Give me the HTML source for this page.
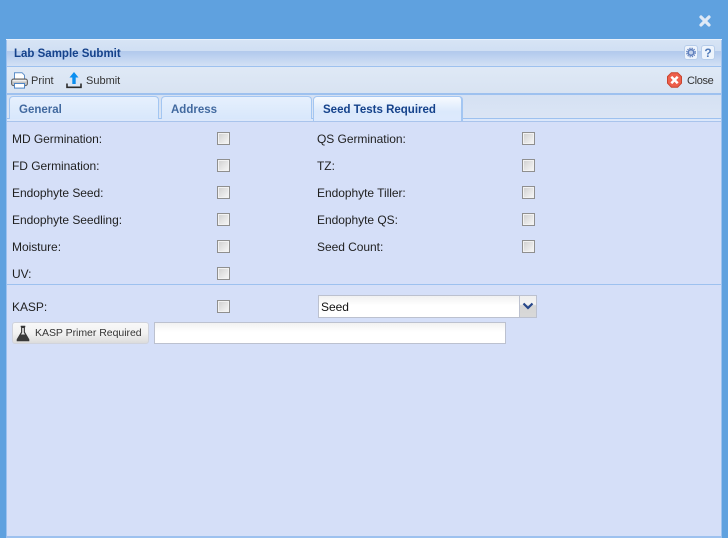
<!DOCTYPE html>
<html>
<head>
<meta charset="utf-8">
<style>
html,body{margin:0;padding:0;width:728px;height:538px;overflow:hidden;background:#5fa1df;font-family:"Liberation Sans",sans-serif;font-size:12px;color:#222}
div,span{position:absolute;box-sizing:border-box}
svg{position:absolute}
.win{left:6px;top:39px;width:716px;height:499px;background:#d5dff8;border-left:1px solid #9cc1ef;border-right:1px solid #9cc1ef}
.abs{white-space:nowrap;line-height:14px}
.lbl{white-space:nowrap;line-height:14px;font-size:12px;color:#1f1f1f;letter-spacing:-.04px}
.tb{white-space:nowrap;line-height:14px;font-size:11px;color:#333}
.cb{width:13px;height:13px;border:1px solid #8f8f8f;background:linear-gradient(135deg,#cfcfcf,#f8f8f8);box-shadow:inset 0 0 0 1px #f2f2f2}
.tab{top:96px;height:23px;border:1px solid #a3c6f2;border-bottom:none;border-radius:4px 4px 0 0;background:linear-gradient(#e6f0fd,#d8e7fc);font-weight:bold;font-size:11.5px;color:#41699f;padding:6px 0 0 9px;line-height:14px;white-space:nowrap}
</style>
</head>
<body>
<svg style="left:698px;top:14px" width="14" height="14" viewBox="0 0 14 14"><path d="M3 3L11 11M11 3L3 11" stroke="#dfe9f6" stroke-width="3.2" stroke-linecap="round"/></svg>

<div class="win"></div>
<div style="left:6px;top:39px;width:716px;height:1px;background:#e8f0fb"></div>
<div style="left:7px;top:40px;width:714px;height:26px;background:linear-gradient(#d7e4f5 0,#d0dff3 11px,#b2c9ec 11px,#b7cdee 14px,#d3e1f5 100%)"></div>
<div class="abs" style="left:14px;top:47px;font-weight:bold;font-size:11.5px;color:#15428b">Lab Sample Submit</div>
<div style="left:684px;top:45px;width:14px;height:15px;background:#eef4fc;border:1px solid #b7cdea;border-radius:3px"></div>
<svg style="left:686px;top:47px" width="10" height="11" viewBox="0 0 10 11"><circle cx="5" cy="5.5" r="2.8" fill="#c3d2ec" stroke="#5f7fbd" stroke-width="1.6"/><circle cx="5" cy="5.5" r="4.3" fill="none" stroke="#5f7fbd" stroke-width="1.2" stroke-dasharray="1.3 1"/></svg>
<div style="left:701px;top:45px;width:14px;height:15px;background:#eef4fc;border:1px solid #b7cdea;border-radius:3px"></div>
<div class="abs" style="left:701px;top:46px;width:14px;text-align:center;font-weight:bold;font-size:12px;color:#4f79b8">?</div>

<div style="left:7px;top:66px;width:714px;height:1px;background:#9dc1ef"></div>
<div style="left:7px;top:67px;width:714px;height:26px;background:linear-gradient(#dfe9f6,#d8e3f2)"></div>
<div style="left:7px;top:93px;width:714px;height:2px;background:#9dc1ef"></div>

<svg style="left:11px;top:72px" width="17" height="17" viewBox="0 0 17 17">
<path d="M3.5 7.5V.7h7.5l2.5 2.5v4.3" fill="#fff" stroke="#5d8fc9"/>
<rect x=".6" y="7" width="15.8" height="6.6" rx="2" fill="#c4c4c4" stroke="#5a5a5a"/>
<rect x="1.5" y="8" width="14" height="1.5" fill="#eee"/>
<rect x="3.5" y="11.5" width="10" height="4.6" fill="#fff" stroke="#4f86c6"/>
</svg>
<div class="tb" style="left:31px;top:74px">Print</div>

<svg style="left:66px;top:71px" width="16" height="18" viewBox="0 0 16 18">
<path d="M8 1L3.5 6.5H6.3V13H9.7V6.5H12.5Z" fill="#0a8ef0"/>
<path d="M1 12.5V16.3H15V12.5" fill="none" stroke="#2c2c2c" stroke-width="1.6"/>
</svg>
<div class="tb" style="left:86px;top:74px">Submit</div>

<svg style="left:667px;top:72px" width="15" height="16" viewBox="0 0 15 16">
<path d="M4.4 .7H10.6L14.5 4.6V11.2L10.6 15.2H4.4L.5 11.2V4.6Z" fill="#ee5f4c" stroke="#c8452f"/>
<path d="M4.3 4.8L10.7 11.2M10.7 4.8L4.3 11.2" stroke="#fff" stroke-width="2.5"/>
</svg>
<div class="tb" style="left:687px;top:74px;letter-spacing:-.35px">Close</div>

<div style="left:7px;top:95px;width:714px;height:24px;background:linear-gradient(#d5e1f3,#dbe5f4)"></div>
<div style="left:7px;top:118px;width:714px;height:1px;background:#9dc1ef"></div>
<div style="left:7px;top:119px;width:714px;height:2px;background:#dce8fb"></div>
<div style="left:7px;top:121px;width:714px;height:1px;background:#a9c4ec"></div>

<div class="tab" style="left:9px;width:150px">General</div>
<div class="tab" style="left:161px;width:151px">Address</div>
<div class="tab" style="left:313px;width:150px;height:25px;color:#15428b;background:linear-gradient(#f7fafe,#dbe9fc 60%,#dce9fd);border-right:2px solid #a3c6f2">Seed Tests Required</div>

<div class="lbl" style="left:12px;top:132px">MD Germination:</div>
<div class="cb" style="left:217px;top:132px"></div>
<div class="lbl" style="left:317px;top:132px">QS Germination:</div>
<div class="cb" style="left:522px;top:132px"></div>

<div class="lbl" style="left:12px;top:159px">FD Germination:</div>
<div class="cb" style="left:217px;top:159px"></div>
<div class="lbl" style="left:317px;top:159px">TZ:</div>
<div class="cb" style="left:522px;top:159px"></div>

<div class="lbl" style="left:12px;top:186px">Endophyte Seed:</div>
<div class="cb" style="left:217px;top:186px"></div>
<div class="lbl" style="left:317px;top:186px">Endophyte Tiller:</div>
<div class="cb" style="left:522px;top:186px"></div>

<div class="lbl" style="left:12px;top:213px">Endophyte Seedling:</div>
<div class="cb" style="left:217px;top:213px"></div>
<div class="lbl" style="left:317px;top:213px">Endophyte QS:</div>
<div class="cb" style="left:522px;top:213px"></div>

<div class="lbl" style="left:12px;top:240px">Moisture:</div>
<div class="cb" style="left:217px;top:240px"></div>
<div class="lbl" style="left:317px;top:240px">Seed Count:</div>
<div class="cb" style="left:522px;top:240px"></div>

<div class="lbl" style="left:12px;top:267px">UV:</div>
<div class="cb" style="left:217px;top:267px"></div>

<div style="left:7px;top:284px;width:714px;height:1px;background:#9dc1ef"></div>

<div class="lbl" style="left:12px;top:300px">KASP:</div>
<div class="cb" style="left:217px;top:300px"></div>

<div class="lbl" style="left:318px;top:295px;width:202px;height:23px;border:1px solid #bcc1cf;border-right:none;background:linear-gradient(#f1f1f1,#fff 45%);padding:4px 0 0 2px;line-height:14px;color:#111">Seed</div>
<div style="left:519px;top:295px;width:18px;height:23px;border:1px solid #bcc1cf;background:linear-gradient(#efefef,#f3f3f3 40%,#d6d6d6 45%,#d8d8d8)"></div>
<svg style="left:522px;top:302px" width="12" height="9" viewBox="0 0 12 9"><path d="M1.5 1.5L6 6L10.5 1.5" fill="none" stroke="#27478a" stroke-width="2.2"/></svg>

<div style="left:12px;top:322px;width:137px;height:22px;border:1px solid #d0d3dc;border-radius:3px;background:linear-gradient(#f8f8f8,#f2f2f2 50%,#dcdcdc)"></div>
<svg style="left:16px;top:325px" width="14" height="17" viewBox="0 0 14 17">
<path d="M5 1H9V2H8.6V7L13 14.5V16H1V14.5L5.4 7V2H5Z" fill="#3a3a3a" stroke="#333" stroke-width=".6"/>
<path d="M6.2 3V7.5L5 9.5H9L7.8 7.5V3Z" fill="#e8e8e8"/>
</svg>
<div class="abs" style="left:35px;top:326px;font-size:10.5px;color:#333;letter-spacing:-.03px">KASP Primer Required</div>

<div style="left:154px;top:322px;width:352px;height:22px;border:1px solid #bcc1cf;background:linear-gradient(#f1f1f1,#fff 45%)"></div>

<div style="left:7px;top:536px;width:714px;height:2px;background:#9dc1ef"></div>
</body>
</html>
